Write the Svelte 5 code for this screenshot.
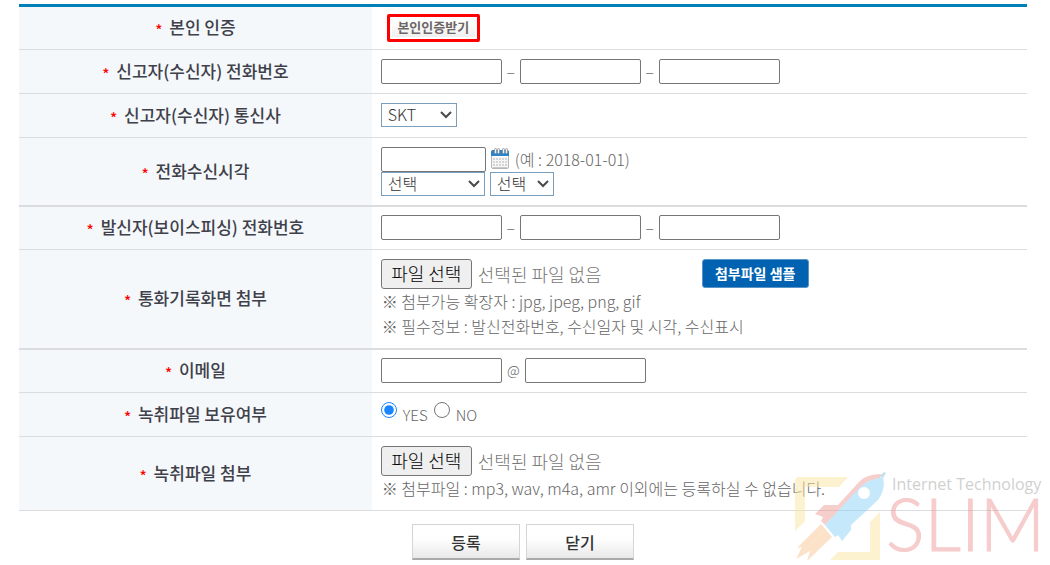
<script lang="ts">
  const carriers = ['SKT', 'KT', 'LG U+'];
  const hours = Array.from({ length: 24 }, (_, i) => `${i}시`);
  const minutes = Array.from({ length: 60 }, (_, i) => `${i}분`);
  let recording = $state('yes');
</script>

{#snippet label(text: string, target: string)}
  <div class="head"><label for={target}><span class="star">*</span> {text}</label></div>
{/snippet}

{#snippet chevron()}
  <svg class="chevron" width="12" height="8" viewBox="0 0 12 8" aria-hidden="true">
    <path d="m1 1 5 5 5-5" fill="none" stroke="#4a4a4a" stroke-width="2" />
  </svg>
{/snippet}

{#snippet phone(id: string, name: string)}
  <div class="line">
    <input {id} class="box" type="text" aria-label="{name} 1" />
    <span class="dash">–</span>
    <input class="box" type="text" aria-label="{name} 2" />
    <span class="dash">–</span>
    <input class="box" type="text" aria-label="{name} 3" />
  </div>
{/snippet}

{#snippet file(id: string)}
  <label class="file">
    <input {id} type="file" />
    <span class="pick">파일 선택</span>
    <span class="none">선택된 파일 없음</span>
  </label>
{/snippet}

<form class="page" onsubmit={(e) => e.preventDefault()}>
  <div class="sheet">
    <div class="row short first">
      {@render label('본인 인증', 'verify')}
      <div class="cell"><button id="verify" class="verify" type="button"><span>본인인증받기</span></button></div>
    </div>
    <div class="row">
      {@render label('신고자(수신자) 전화번호', 'receiver')}
      <div class="cell">{@render phone('receiver', '신고자 전화번호')}</div>
    </div>
    <div class="row">
      {@render label('신고자(수신자) 통신사', 'carrier')}
      <div class="cell">
        <div class="line">
          <span class="select carrier">
            <select id="carrier">
              {#each carriers as c}<option>{c}</option>{/each}
            </select>
            {@render chevron()}
          </span>
        </div>
      </div>
    </div>
    <div class="row thick">
      {@render label('전화수신시각', 'date')}
      <div class="cell">
        <div class="line close">
          <input id="date" class="box date" type="text" />
          <button class="calendar" type="button" aria-label="달력">
            <svg width="19" height="24" viewBox="0 0 19 24">
              <rect x="0.5" y="2.5" width="17" height="18" rx="1.5" fill="#f6f6f6" stroke="#b5b5b5" />
              <path d="M0 8V4q0-2 2-2h14q2 0 2 2v4z" fill="#2f83c8" />
              <path d="M1 8.5h16" stroke="#fff" />
              <path d="M2 19.5h14" stroke="#c9c9c9" />
              <g fill="#f1f3f5" stroke="#899097" stroke-width="0.8">
                <rect x="3.5" y="0.5" width="2" height="5" rx="1" />
                <rect x="6.5" y="0.5" width="2" height="5" rx="1" />
                <rect x="11.5" y="0.5" width="2" height="5" rx="1" />
                <rect x="14.5" y="0.5" width="2" height="5" rx="1" />
              </g>
              <g stroke="#d6d6d6" stroke-width="2" stroke-dasharray="2 1">
                <path d="M2 11h14M2 14h14M2 17h14" />
              </g>
            </svg>
          </button>
          <span>(예 : 2018-01-01)</span>
        </div>
        <div class="line close">
          <span class="select hour">
            <select aria-label="시">
              <option>선택</option>
              {#each hours as h}<option>{h}</option>{/each}
            </select>
            {@render chevron()}
          </span>
          <span class="select minute">
            <select aria-label="분">
              <option>선택</option>
              {#each minutes as m}<option>{m}</option>{/each}
            </select>
            {@render chevron()}
          </span>
        </div>
      </div>
    </div>
    <div class="row short">
      {@render label('발신자(보이스피싱) 전화번호', 'caller')}
      <div class="cell">{@render phone('caller', '발신자 전화번호')}</div>
    </div>
    <div class="row thick">
      {@render label('통화기록화면 첨부', 'capture')}
      <div class="cell">
        <div class="attach">
          {@render file('capture')}
          <button class="sample" type="button">첨부파일 샘플</button>
        </div>
        <p>※ 첨부가능 확장자 : jpg, jpeg, png, gif</p>
        <p>※ 필수정보 : 발신전화번호, 수신일자 및 시각, 수신표시</p>
      </div>
    </div>
    <div class="row short">
      {@render label('이메일', 'email')}
      <div class="cell">
        <div class="line">
          <input id="email" class="box" type="text" />
          <span class="at">@</span>
          <input class="box" type="text" aria-label="이메일 도메인" />
        </div>
      </div>
    </div>
    <div class="row">
      {@render label('녹취파일 보유여부', 'yes')}
      <div class="cell">
        <div class="radios">
          <input id="yes" type="radio" name="recording" value="yes" bind:group={recording} />
          <label for="yes">YES</label>
          <input id="no" type="radio" name="recording" value="no" bind:group={recording} />
          <label for="no">NO</label>
        </div>
      </div>
    </div>
    <div class="row">
      {@render label('녹취파일 첨부', 'audio')}
      <div class="cell">
        {@render file('audio')}
        <p>※ 첨부파일 : mp3, wav, m4a, amr 이외에는 등록하실 수 없습니다.</p>
      </div>
    </div>
  </div>

  <div class="foot">
    <button class="action" type="submit">등록</button>
    <button class="action" type="button">닫기</button>
    <svg class="mark" width="248" height="94" viewBox="0 0 248 94" aria-hidden="true">
      <path d="M0 61V11q0-4 4-4h49L44 17H10v34z" fill="#fbe6a0" />
      <path d="M85 42v45q0 5-5 5H33l10-10h32V52z" fill="#fbe6a0" />
      <path d="M26 54 37 67 12 91l3-10-14 8 6-12-5 1z" fill="#fbc793" />
      <path d="m30 55-4-4 2-4-8-3 9-9h14l20-22Q70 4 87 4l-2 4-13 4z" fill="#ef9f9a" />
      <path d="M30 55 65 17q9-8 23-10 3 12-5 23L56 55v5l-9 11-4-6-3 2z" fill="#8dd2f7" />
      <path d="m85 6 4-4 2 1-3 5z" fill="#8fc4dc" />
      <circle cx="69" cy="23" r="6" fill="#fff" />
      <text class="small" x="97" y="20">Internet Technology</text>
      <text class="big" x="91" y="81">SLIM</text>
    </svg>
  </div>
</form>

<style>
  :global(body) {
    margin: 0;
    background: #fff;
  }
  .page,
  .page input,
  .page select,
  .page button {
    font-family: 'Noto Sans CJK KR', sans-serif;
    font-size: 16px;
  }
  .page {
    padding: 4px 23px 0 19px;
    font-weight: 300;
    line-height: 25px;
    color: #666;
  }
  .sheet {
    border-top: 3px solid #0080b9;
  }
  .row {
    display: flex;
    box-sizing: border-box;
    min-height: 44px;
    border-bottom: 1px solid #dadcde;
  }
  .row.short {
    min-height: 43px;
  }
  .row.thick {
    border-bottom-width: 2px;
  }
  .head {
    flex: 0 0 35%;
    display: flex;
    align-items: center;
    justify-content: center;
    background: #f4f8fb;
    color: #40404a;
    font-size: 17px;
    font-weight: 500;
  }
  .star {
    margin-right: 3px;
    color: #f00;
    font-size: 15px;
    vertical-align: -2px;
  }
  .cell {
    flex: 1;
    min-width: 0;
    padding: 9px;
  }
  .short .cell {
    padding-block: 8px;
  }
  .first .cell {
    padding-block: 7px;
  }
  .line {
    display: flex;
    align-items: center;
  }
  .close {
    gap: 5px;
  }
  .box {
    box-sizing: border-box;
    width: 121px;
    height: 25px;
    border: 1px solid #767676;
    border-radius: 2px;
  }
  .date {
    width: 105px;
  }
  .dash,
  .at {
    width: 18px;
    text-align: center;
  }
  .at {
    width: 23px;
    font-size: 14px;
  }
  .select {
    display: grid;
    align-items: center;
    height: 24px;
  }
  .select > :global(*) {
    grid-area: 1 / 1;
  }
  .chevron {
    justify-self: end;
    margin-right: 5px;
    pointer-events: none;
  }
  select {
    box-sizing: border-box;
    appearance: none;
    width: 100%;
    height: 24px;
    padding: 0 6px 2px;
    border: 1px solid #7b9ebd;
    border-radius: 0;
    background: #fff;
    color: #333;
    font-weight: 300;
    line-height: 20px;
  }
  .carrier {
    width: 76px;
  }
  .hour {
    width: 104px;
  }
  .minute {
    width: 64px;
  }
  button {
    box-sizing: border-box;
    padding: 0;
    border: 0;
    background: none;
    cursor: pointer;
  }
  .calendar {
    display: flex;
  }
  .page .verify {
    display: flex;
    margin-left: 6px;
    width: 93px;
    height: 28px;
    padding: 2px;
    border: 3px solid #f00;
    border-radius: 2px;
    color: #6c6666;
    font-size: 13px;
    font-weight: 700;
    line-height: 16px;
  }
  .verify span {
    flex: 1;
    background: linear-gradient(#fff, #f0f0f0);
  }
  .file {
    display: flex;
    align-items: center;
    gap: 6px;
    height: 30px;
    font-size: 18px;
  }
  .file input {
    position: absolute;
    width: 1px;
    height: 1px;
    opacity: 0;
  }
  .pick {
    box-sizing: border-box;
    width: 91px;
    height: 30px;
    border: 1px solid #767676;
    border-radius: 3px;
    background: #efefef;
    color: #000;
    text-align: center;
    line-height: 27px;
  }
  .none {
    color: #777;
  }
  .attach {
    display: flex;
    gap: 100px;
  }
  .page .sample {
    width: 107px;
    height: 29px;
    border: 1px solid #5b94c6;
    border-radius: 3px;
    background: #0062b1;
    color: #fff;
    font-size: 14px;
    font-weight: 700;
    line-height: 25px;
  }
  p {
    margin: 0;
    padding-left: 1px;
  }
  .radios {
    display: flex;
    align-items: flex-start;
    height: 25px;
    font-size: 15px;
  }
  .radios input {
    width: 16px;
    height: 16px;
    margin: 0 6px 0 0;
    accent-color: #1a85ff;
  }
  .radios label {
    margin-right: 6px;
  }
  .foot {
    position: relative;
    display: flex;
    justify-content: center;
    gap: 6px;
    padding-top: 13px;
  }
  .page .action {
    width: 108px;
    height: 36px;
    border: 1px solid #d5d5d5;
    border-bottom: 2px solid #aaa;
    background: linear-gradient(#fff 40%, #e9e9e9);
    color: #333;
    font-weight: 500;
    line-height: 30px;
  }
  .mark {
    position: absolute;
    top: -41px;
    right: -16px;
    opacity: 0.5;
    overflow: visible;
    pointer-events: none;
  }
  .small {
    font: 400 16px 'Open Sans', sans-serif;
    fill: #a3a3a3;
  }
  .big {
    font: 300 72px Lato, sans-serif;
    fill: #ee9a9a;
    stroke: #ee9a9a;
  }
</style>
